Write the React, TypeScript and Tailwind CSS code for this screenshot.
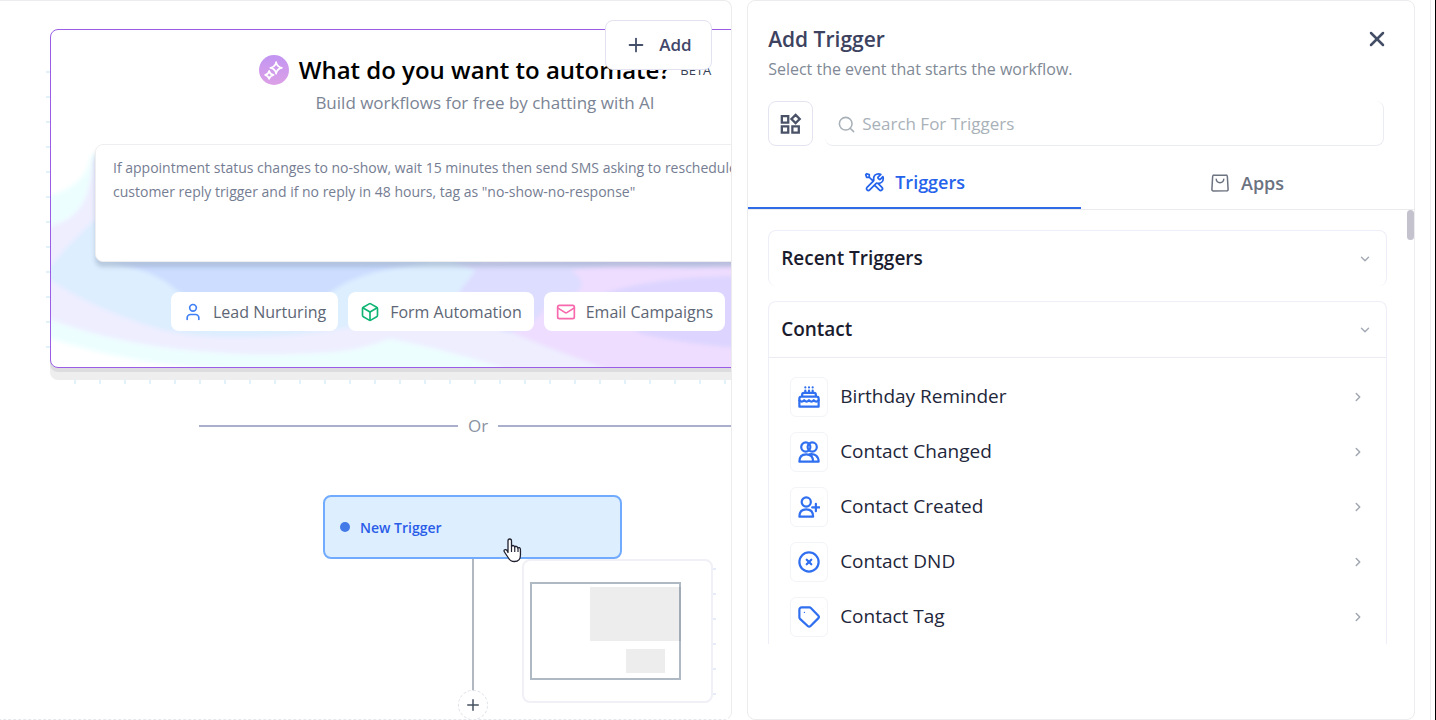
import React from 'react';
import { Box, ChevronDown, ChevronRight, Mail, Plus, Search, User, X } from 'lucide-react';

const templates = [
  { label: 'Lead Nurturing', icon: <User size={20} className="text-[#4080f5]" /> },
  { label: 'Form Automation', icon: <Box size={20} className="text-[#10b574]" /> },
  { label: 'Email Campaigns', icon: <Mail size={20} className="text-[#f868ac]" /> },
];

const prompt =
  'If appointment status changes to no-show, wait 15 minutes then send SMS asking to reschedule, add\ncustomer reply trigger and if no reply in 48 hours, tag as "no-show-no-response"';

function LineIcon({ size = 24, width = 2, children }: { size?: number; width?: number; children: React.ReactNode }) {
  return (
    <svg
      width={size}
      height={size}
      viewBox="0 0 24 24"
      fill="none"
      stroke="currentColor"
      strokeWidth={width}
      strokeLinecap="round"
      strokeLinejoin="round"
      className="shrink-0"
      aria-hidden="true"
    >
      {children}
    </svg>
  );
}

const contactTriggers = [
  {
    label: 'Birthday Reminder',
    icon: (
      <>
        <path d="M1.5 22.5v-9a2 2 0 0 1 2-2h17a2 2 0 0 1 2 2v9zM4.5 11.5v-2a2 2 0 0 1 2-2h11a2 2 0 0 1 2 2v2M8 7V5M12 7V5M16 7V5M8 1.500v.1M12 1.500v.1M16 1.500v.1" />
        <path d="M1.5 15.500c1.750 2 3.500 2 5.250 0 1.750 2 3.500 2 5.250 0 1.750 2 3.500 2 5.250 0 1.750 2 3.500 2 5.250 0" />
      </>
    ),
  },
  {
    label: 'Contact Changed',
    icon: (
      <>
        <circle cx="8.500" cy="6.500" r="5" />
        <circle cx="15.500" cy="6.500" r="5" />
        <path d="M1.500 22.500c0-5 2.500-8 7.500-8s7.500 3 7.500 8zM12.500 14.500c6-1 10 2 10 8h-6" />
      </>
    ),
  },
  {
    label: 'Contact Created',
    icon: (
      <>
        <circle cx="9" cy="6.500" r="5" />
        <path d="M1.500 22.500c0-5 2.500-8 7.500-8s7.500 3 7.500 8zM19.500 8.500v8M15.500 12.500h8" />
      </>
    ),
  },
  {
    label: 'Contact DND',
    icon: (
      <>
        <circle cx="12" cy="12" r="10.500" />
        <path d="m9.500 9.500 5 5M14.500 9.500l-5 5" />
      </>
    ),
  },
  {
    label: 'Contact Tag',
    icon: (
      <>
        <path d="M1.500 4a2.500 2.500 0 0 1 2.500-2.500h8.500a2 2 0 0 1 1.500.6l8 8.300a2.200 2.200 0 0 1 0 3.100l-8.300 8.300a2.200 2.200 0 0 1-3.100 0L2.200 14a2.500 2.500 0 0 1-.7-1.700z" />
        <path d="M7 7h.01" strokeWidth="1.500" />
      </>
    ),
  },
];

function Aurora() {
  return (
    <svg className="absolute inset-0 h-full w-full" viewBox="0 0 868 337" preserveAspectRatio="none" aria-hidden="true">
      <defs>
        <filter id="soft" x="-5%" y="-5%" width="110%" height="110%">
          <feGaussianBlur stdDeviation="2" />
        </filter>
      </defs>
      <g filter="url(#soft)">
        <path fill="#edfeff" d="M-10 168Q36 158 40 125H878V347H388Q200 345 97 332Q30 320 -10 305Z" />
        <path fill="#eeeeff" d="M-10 200C20 190 38 184 42 130H878V347H480Q400 320 338 309Q310 320 283 322Q220 326 174 323Q70 318 -10 286Z" />
        <path fill="#ddeeff" d="M-10 248Q15 216 44 190H450L424 243L400 275L301 297Q240 308 174 307Q130 306 102 297Q40 278 -10 244Z" />
        <path fill="#ccddff" d="M60 233Q104 240 125 260L150 275H260L283 260Q310 240 380 233Z" />
        <path fill="#ddddff" d="M400 233L425 240L408 262Q420 290 456 302L560 300L878 230V220Z" />
        <path fill="#eeddff" d="M520 240Q570 232 640 238L878 222V347H580Q500 320 460 302Q490 292 497 272Q550 262 520 240Z" />
        <path fill="#ddd5ff" d="M545 266Q600 246 690 246H878V325Q680 325 590 304Z" />
      </g>
    </svg>
  );
}

function AiCard() {
  return (
    <section className="absolute top-[28px] left-[50px] h-[339px] w-[870px] rounded-lg border border-[#9b5de5] bg-white shadow-[0_4px_0_#dddddf,0_12px_0_#eeeeee]">
      <div className="relative flex h-full flex-col items-center overflow-hidden rounded-[7px] pt-6">
        <Aurora />
        <div className="relative flex h-8 items-center gap-2.5">
          <span className="flex size-[30px] items-center justify-center rounded-full bg-linear-to-b from-[#c295f2] to-[#dca0e6] text-white">
            <LineIcon size={21} width={2}>
              <path d="M15 2.500Q16 8 21.500 9Q16 10 15 15.500Q14 10 8.500 9Q14 8 15 2.500ZM7 12.500Q8 16.500 12 17Q8 18 7 21.500Q6 18 2.500 17Q6 16.500 7 12.500Z" />
            </LineIcon>
          </span>
          <h1 className="text-[24px] font-semibold whitespace-nowrap text-black">What do you want to automate?</h1>
          <span className="text-[13px] leading-4 text-gray-700">BETA</span>
        </div>
        <p className="relative mt-[3px] text-[17px] leading-7 text-[#7b8494]">Build workflows for free by chatting with AI</p>
        <textarea
          aria-label="Describe your workflow"
          defaultValue={prompt}
          className="relative mt-[27px] h-[118px] w-[780px] shrink-0 resize-none overflow-hidden rounded-lg border border-[#eeeef0] bg-white px-[17px] py-[11px] text-[14px] leading-6 whitespace-pre text-[#757d92] shadow-[0_5px_4px_rgba(100,120,150,0.3)] outline-none"
        />
        <div className="relative mt-[30px] flex gap-2.5 self-stretch pl-[120px]">
          {templates.map((t) => (
            <button key={t.label} className="flex h-[39px] items-center gap-2.5 rounded-lg bg-white px-3 text-[16px] whitespace-nowrap text-[#5d6675]">
              {t.icon}
              {t.label}
            </button>
          ))}
        </div>
      </div>
    </section>
  );
}

function Minimap() {
  return (
    <div className="absolute top-[558px] left-[522px] h-[144px] w-[191px] rounded-lg border-2 border-[#f0f0f6] bg-white p-1.5 pt-[21px]">
      <div className="relative h-[98px] w-[151px] border-2 border-[#aeb9c4]">
        <div className="absolute top-[3px] left-[58px] h-[54px] w-[91px] bg-black/7" />
        <div className="absolute top-[65px] left-[94px] h-6 w-[39px] bg-black/7" />
      </div>
    </div>
  );
}

function Canvas() {
  return (
    <main className="relative min-w-0 flex-1 overflow-hidden rounded-tr-lg rounded-br-lg border-t border-r border-b border-[#ececee] border-b-[#e4e7ec] [border-bottom-style:dashed]">
      {/* grid marks that show round the card */}
      <div className="absolute top-[70px] left-[46px] h-[280px] w-1 bg-[repeating-linear-gradient(180deg,#e2f2fb_0px,#e2f2fb_2px,transparent_2px,transparent_25px)]" />
      <div className="absolute top-[379px] right-0 left-[74px] h-1 bg-[repeating-linear-gradient(90deg,#e2f2fb_0px,#e2f2fb_2px,transparent_2px,transparent_25px)]" />
      <AiCard />

      <button className="absolute top-[19px] left-[605px] flex h-[50px] w-[107px] items-center justify-center gap-3 rounded-lg border border-[#e2e2f0] bg-white text-[17px] font-semibold text-[#42476a]">
        <Plus size={22} className="text-[#44506a]" />
        Add
      </button>

      <div className="absolute top-[411px] left-[199px] flex w-[558px] items-center gap-2.5 text-[17px] leading-7 text-[#8a92a2]">
        <span className="h-0.5 flex-1 bg-[#aab0cc]" />
        Or
        <span className="h-0.5 flex-1 bg-[#aab0cc]" />
      </div>

      <button className="absolute top-[494px] left-[323px] flex h-16 w-[299px] items-center gap-2.5 rounded-lg border-2 border-[#70abff] bg-[#ddeeff] px-[15px] text-[14px] font-semibold text-[#2a5de8]">
        <span className="size-2.5 rounded-full bg-[#447ae8]" />
        New Trigger
      </button>
      <div className="absolute top-[558px] left-[472px] h-[132px] w-0.5 bg-[#b2b8c2]" />
      <button aria-label="Add step" className="absolute top-[689px] left-[458px] flex size-[30px] items-center justify-center rounded-full border border-dashed border-[#dfe2e8] bg-white text-[#44505f]">
        <Plus size={18} />
      </button>
      <div className="absolute top-[567px] left-[712px] h-[128px] w-1 bg-[repeating-linear-gradient(180deg,#e6ecfa_0px,#e6ecfa_2px,transparent_2px,transparent_25px)]" />
      <Minimap />

      <svg className="absolute top-[537px] left-[503px]" width="19" height="25" viewBox="0 0 19 25" aria-hidden="true">
        <path
          d="M5 14.500V3q0-2 1.750-2t1.750 2v6q0-1.500 1.500-1.500t1.750 2q.2-1.500 1.500-1.200t1.700 2q.5-1 1.500-.6t1 2V17q0 6.500-6 6.500-4 0-6-3.500l-4-6q-1-1.500.3-2.200t2.300.7z"
          fill="white"
          stroke="#1f2030"
          strokeWidth="1.300"
          strokeLinejoin="round"
        />
        <path d="M8.500 9v5M11.750 9.500V14M15 10.500V14" stroke="#1f2030" strokeWidth="1.200" />
      </svg>
    </main>
  );
}

function TriggerPanel() {
  return (
    <aside className="relative flex w-[47.2%] shrink-0 flex-col overflow-hidden rounded-lg border border-[#ececee] bg-white">
      <header className="flex items-start justify-between px-5 pt-[22px] pr-[25px]">
        <div>
          <h2 className="text-[21px] leading-8 font-semibold text-[#3c4260]">Add Trigger</h2>
          <p className="text-[16px] leading-7 text-[#808995]">Select the event that starts the workflow.</p>
        </div>
        <button aria-label="Close" className="mt-1 text-[#434d66]">
          <X size={24} strokeWidth={2.5} />
        </button>
      </header>

      <div className="mt-[18px] flex gap-3 pr-[30px] pl-5">
        <button aria-label="Browse categories" className="flex size-[45px] shrink-0 items-center justify-center rounded-lg border border-[#e4e4f0] text-[#4a5268]">
          <LineIcon size={22} width={2.5}>
            <path d="M2 3.500h7v7h-7zM2 14.500h7v7h-7zM13.500 14.500h7v7h-7zM17 2l4.500 4.500-4.500 4.500-4.500-4.500z" strokeLinejoin="miter" />
          </LineIcon>
        </button>
        <label className="flex h-[45px] flex-1 items-center gap-1.5 rounded-lg border-r border-b border-[#ebebf2] pt-0.5 pl-3 text-[#a9b1b8]">
          <Search size={19} />
          <input
            type="text"
            aria-label="Search For Triggers"
            placeholder="Search For Triggers"
            className="min-w-0 flex-1 text-[17px] text-gray-800 outline-none placeholder:text-[#a9b1b8]"
          />
        </label>
      </div>

      <div role="tablist" className="mt-[11px] flex h-[53px] shrink-0 border-b border-[#ebebee] text-[18px] font-semibold">
        <button role="tab" aria-selected="true" className="flex flex-1 items-center justify-center gap-2.5 border-b-2 border-[#2f6be4] text-[#2563eb]">
          <LineIcon size={21} width={2}>
            <path d="M6 6L10.500 10.500M6 6H3L2 3L3 2L6 3V6ZM19.259 2.741L16.631 5.369C16.235 5.765 16.037 5.963 15.963 6.191C15.898 6.392 15.898 6.608 15.963 6.809C16.037 7.037 16.235 7.235 16.631 7.631L16.869 7.869C17.265 8.265 17.463 8.463 17.691 8.537C17.892 8.602 18.108 8.602 18.309 8.537C18.537 8.463 18.735 8.265 19.131 7.869L21.589 5.411C21.854 6.055 22 6.760 22 7.500C22 10.538 19.538 13 16.500 13C16.134 13 15.776 12.964 15.430 12.896C14.944 12.800 14.701 12.752 14.553 12.767C14.397 12.782 14.319 12.806 14.181 12.880C14.050 12.950 13.919 13.081 13.657 13.343L6.500 20.500C5.672 21.328 4.328 21.328 3.500 20.500C2.672 19.672 2.672 18.328 3.500 17.500L10.657 10.343C10.919 10.081 11.050 9.950 11.120 9.819C11.194 9.681 11.218 9.603 11.233 9.447C11.248 9.299 11.200 9.056 11.104 8.570C11.036 8.224 11 7.866 11 7.500C11 4.462 13.462 2 16.500 2C17.506 2 18.448 2.270 19.259 2.741ZM12 15L17.500 20.500C18.328 21.328 19.672 21.328 20.500 20.500C21.328 19.672 21.328 18.328 20.500 17.500L15.975 12.975" />
          </LineIcon>
          Triggers
        </button>
        <button role="tab" aria-selected="false" className="flex flex-1 items-center justify-center gap-3 text-[#6b7280]">
          <LineIcon size={18} width={2}>
            <path d="M4.200 1.500h15.600a2 2 0 0 1 2 1.800l1 17a2 2 0 0 1-2 2.200H3.200a2 2 0 0 1-2-2.200l1-17a2 2 0 0 1 2-1.800zM7 7q.5 4.500 5 4.500t5-4.500" />
          </LineIcon>
          Apps
        </button>
      </div>

      <div className="flex flex-col gap-[15px] pt-5 pr-[27px] pl-5">
        <section className="rounded-lg border-x border-t border-[#eeeef8]">
          <h3>
            <button className="flex h-[55px] w-full items-center justify-between pr-3.5 pl-3 text-[19px] font-semibold text-[#1a1c2e]">
              Recent Triggers
              <ChevronDown size={14} strokeWidth={2.5} className="text-[#a4abb5]" />
            </button>
          </h3>
        </section>
        <section className="rounded-t-lg border-x border-t border-[#eeeef8]">
          <h3>
            <button className="flex h-14 w-full items-center justify-between border-b border-[#ebebf2] pr-3.5 pl-3 text-[19px] font-semibold text-[#1a1c2e]">
              Contact
              <ChevronDown size={14} strokeWidth={2.5} className="text-[#a4abb5]" />
            </button>
          </h3>
          <ul className="flex h-[286px] flex-col pt-[11px]">
            {contactTriggers.map((t) => (
              <li key={t.label} className="flex-1">
                <button className="flex h-full w-full items-center pr-[21px] pl-[21px] text-left text-[19px] text-[#22263a]">
                  <span className="mr-3 flex h-10 w-[38px] items-center justify-center rounded-md border border-[#f3f4f8] text-[#2f6ff0]">
                    <LineIcon size={22} width={2.4}>{t.icon}</LineIcon>
                  </span>
                  {t.label}
                  <ChevronRight size={14} strokeWidth={2.5} className="ml-auto text-[#a0a7b0]" />
                </button>
              </li>
            ))}
          </ul>
        </section>
      </div>

      <div className="absolute top-[209px] right-0 h-[30px] w-[7px] rounded-full bg-[#c4c2cc]" />
    </aside>
  );
}

export default function App() {
  return (
    <div className="h-screen overflow-hidden border-r border-black bg-white pr-1 font-['Open_Sans','Noto_Sans',sans-serif]">
      <div className="flex h-full gap-[15px] border-r border-[#ececee] pr-[15px]">
        <Canvas />
        <TriggerPanel />
      </div>
    </div>
  );
}
